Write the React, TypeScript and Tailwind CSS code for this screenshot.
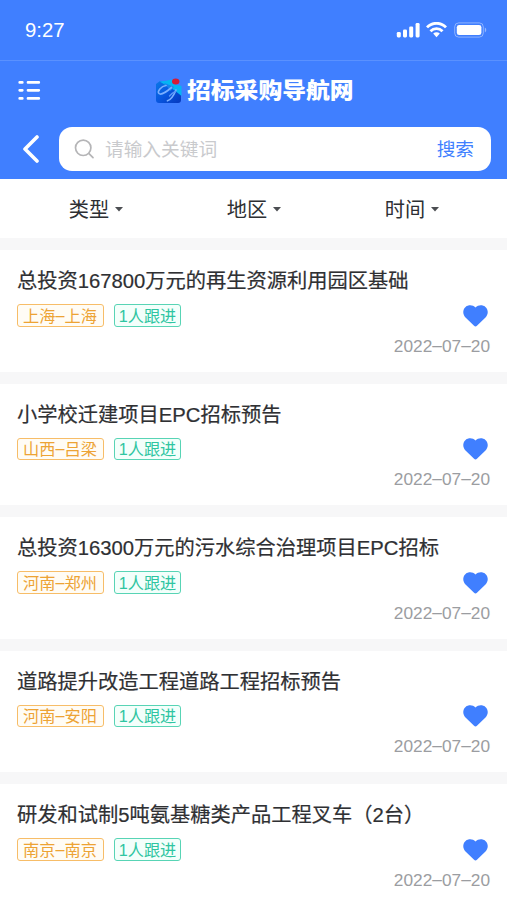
import { Fragment } from 'react';

const notices = [
  { title: '总投资167800万元的再生资源利用园区基础', area: '上海–上海' },
  { title: '小学校迁建项目EPC招标预告', area: '山西–吕梁' },
  { title: '总投资16300万元的污水综合治理项目EPC招标', area: '河南–郑州' },
  { title: '道路提升改造工程道路工程招标预告', area: '河南–安阳' },
  { title: '研发和试制5吨氨基糖类产品工程叉车（2台）', area: '南京–南京' },
];

// Raises en dashes to the optical middle of the digits and Han characters.
function Dashed({ text }: { text: string }) {
  return (
    <span>
      {text.split('–').map((part, i) => (
        <Fragment key={i}>
          {i > 0 && <span className="inline-block align-[1px] leading-[14px]">–</span>}
          {part}
        </Fragment>
      ))}
    </span>
  );
}

function StatusBar() {
  return (
    <div className="flex h-[61px] items-center justify-between border-b border-[#5a91ff] pl-[25px] pr-[20px]">
      <span className="text-[20.3px] leading-[24px]">9:27</span>
      <div className="flex items-center">
        <svg width="24" height="16" viewBox="0 0 24 16" fill="#fff">
          <rect x="0.8" y="10" width="4" height="5.4" rx="1.3" />
          <rect x="7" y="7.4" width="4" height="8" rx="1.3" />
          <rect x="13.2" y="4.4" width="4" height="11" rx="1.3" />
          <rect x="19.6" y="1" width="4" height="14.4" rx="1.3" />
        </svg>
        <svg className="ml-[6px]" width="21" height="16" viewBox="0 0 21 16" fill="none" stroke="#fff" strokeWidth="2.8">
          <path d="M1 5.4C6.2-.1 14.8-.1 20 5.4" />
          <path d="M4.5 9.2C7.8 5.8 13.2 5.8 16.5 9.2" />
          <path d="M7.2 11.6c1.9-1.7 4.7-1.7 6.6 0L10.5 15.2Z" fill="#fff" stroke="none" />
        </svg>
        <svg className="ml-[7px]" width="33" height="16" viewBox="0 0 33 16">
          <rect x="0.7" y="0.9" width="28.6" height="14.2" rx="4" fill="none" stroke="#fff" strokeOpacity=".4" />
          <rect x="2.8" y="2.9" width="24.6" height="10.2" rx="2.4" fill="#fff" />
          <path d="M30.8 5.6c1.9.8 1.9 4 0 4.8Z" fill="#fff" fillOpacity=".45" />
        </svg>
      </div>
    </div>
  );
}

function Logo() {
  return (
    <svg width="28" height="26" viewBox="0 0 28 26">
      <defs>
        <linearGradient id="tile" x1="0" y1="0" x2="1" y2="1">
          <stop offset="0" stopColor="#0a78e8" />
          <stop offset=".5" stopColor="#0756df" />
          <stop offset="1" stopColor="#0638bd" />
        </linearGradient>
      </defs>
      <path d="M1 6L5 3 26 9V22Q26 25 23 25H4Q1 25 1 22Z" fill="url(#tile)" />
      <path d="M4.5 3.5Q12 3 17 1.2L20 6.5 26.5 8V18Q23 15 19 12Z" fill="#05b5f3" />
      <path d="M9 4.8 19 9 15.5 13Z" fill="#1683ed" />
      <path d="M11 7.5C6 8 2 13.5 4 15.5S12.5 13 16.5 9.5M21 12C18.5 18 15.5 22 12.5 22.8" fill="none" stroke="#79aeff" strokeWidth="1.7" strokeLinecap="round" />
      <path d="M20.5 13.5Q17 15 14.5 18" fill="none" stroke="#5b98f8" strokeWidth="1.4" strokeLinecap="round" />
      <ellipse cx="20.7" cy="3.5" rx="3.7" ry="3" fill="#d51c36" />
    </svg>
  );
}

function Header() {
  return (
    <header className="h-[178.5px] bg-[#407fff] text-white">
      <StatusBar />
      <div className="flex h-[60px] items-center">
        <svg className="ml-[18px]" width="23" height="20" viewBox="0 0 23 20" stroke="#fff" strokeWidth="2.7" strokeLinecap="round">
          <path d="M1.7 1.4H4.3M10 1.4H20.8M1.7 9.3H4.3M10 9.3H20.8M1.7 17.4H4.3M10 17.4H20.8" />
        </svg>
        <div className="ml-[114px] flex items-center">
          <Logo />
          <span className="ml-[4px] origin-center scale-y-[.9] whitespace-nowrap text-[23.8px] font-black leading-[28px]">招标采购导航网</span>
        </div>
      </div>
      <div className="flex items-center pt-[6px]">
        <svg className="ml-[22px]" width="18" height="28" viewBox="0 0 18 28" fill="none" stroke="#fff" strokeWidth="3.6" strokeLinecap="round" strokeLinejoin="round">
          <path d="M15 2 3 14 15 26" />
        </svg>
        <div className="ml-[19px] flex h-[43.5px] w-[432px] items-center rounded-[13px] bg-white pl-[15px] pr-[17px]">
          <svg width="21" height="21" viewBox="0 0 21 21" fill="none" stroke="#b5b5b7" strokeWidth="1.7" strokeLinecap="round">
            <circle cx="9.2" cy="9.8" r="7.7" />
            <path d="m15 15.6 4 4" />
          </svg>
          <span className="ml-[10px] pt-[2px] text-[18.7px] leading-[28px] text-[#c9cacd]">请输入关键词</span>
          <span className="ml-auto pt-[2px] text-[18.7px] leading-[28px] text-[#407fff]">搜索</span>
        </div>
      </div>
    </header>
  );
}

function Filters() {
  return (
    <nav className="flex h-[59.5px] bg-white pl-[17px] pr-[16px] text-[20.2px] text-[#2d2f33]">
      {['类型', '地区', '时间'].map((name) => (
        <div key={name} className="flex flex-1 items-center justify-center">
          <span className="pt-[4px] leading-[28px]">{name}</span>
          <svg className="ml-[6px] mt-[2px]" width="8" height="5" viewBox="0 0 8 5" fill="#4c4e52">
            <path d="M0 0H8L4 4.6Z" />
          </svg>
        </div>
      ))}
    </nav>
  );
}

export default function App() {
  return (
    <div className="h-[900px] w-[507px] overflow-hidden bg-[#f7f7f8] font-['Liberation_Sans','Noto_Sans_CJK_SC',sans-serif]">
      <Header />
      <Filters />
      <main className="mt-[12px] flex flex-col gap-[12px]">
        {notices.map(({ title, area }) => (
          <article key={title} className="h-[121.5px] bg-white pl-[17px] pr-[17px] pt-[16px]">
            <h2 className="whitespace-nowrap text-[20.25px] font-normal leading-[30px] text-[#2f3033] [-webkit-text-stroke:0.2px_#2f3033]">{title}</h2>
            <div className="mt-[8px] flex h-[23px] items-center text-[16.2px] leading-[20px]">
              <span className="flex h-[22.5px] w-[87px] items-center justify-center rounded-[3px] border border-[#f7bd68] bg-[#fffcf5] pr-[1px] text-[#eda334]">
                <Dashed text={area} />
              </span>
              <span className="ml-[10px] flex h-[22.5px] w-[67px] items-center justify-center rounded-[3px] border border-[#58d4b5] bg-[#f3fffb] text-[#2fc5a1]">1人跟进</span>
              <svg className="ml-auto mr-[2px]" width="25" height="22" viewBox="0 0 25 22" fill="#407fff">
                <path d="M12.5 21.4Q11.8 21.4 10.8 20.4L2.5 12.5C-.6 9.4-.4 4.4 2.6 1.9C5.6-.4 9.8-.1 12.5 2.4C15.2-.1 19.4-.4 22.4 1.9C25.4 4.4 25.6 9.4 22.5 12.5L14.2 20.4Q13.2 21.4 12.5 21.4Z" />
              </svg>
            </div>
            <div className="mt-[8.5px] text-right text-[17.3px] leading-[20px] text-[#9b9da1]">
              <Dashed text="2022–07–20" />
            </div>
          </article>
        ))}
      </main>
    </div>
  );
}
